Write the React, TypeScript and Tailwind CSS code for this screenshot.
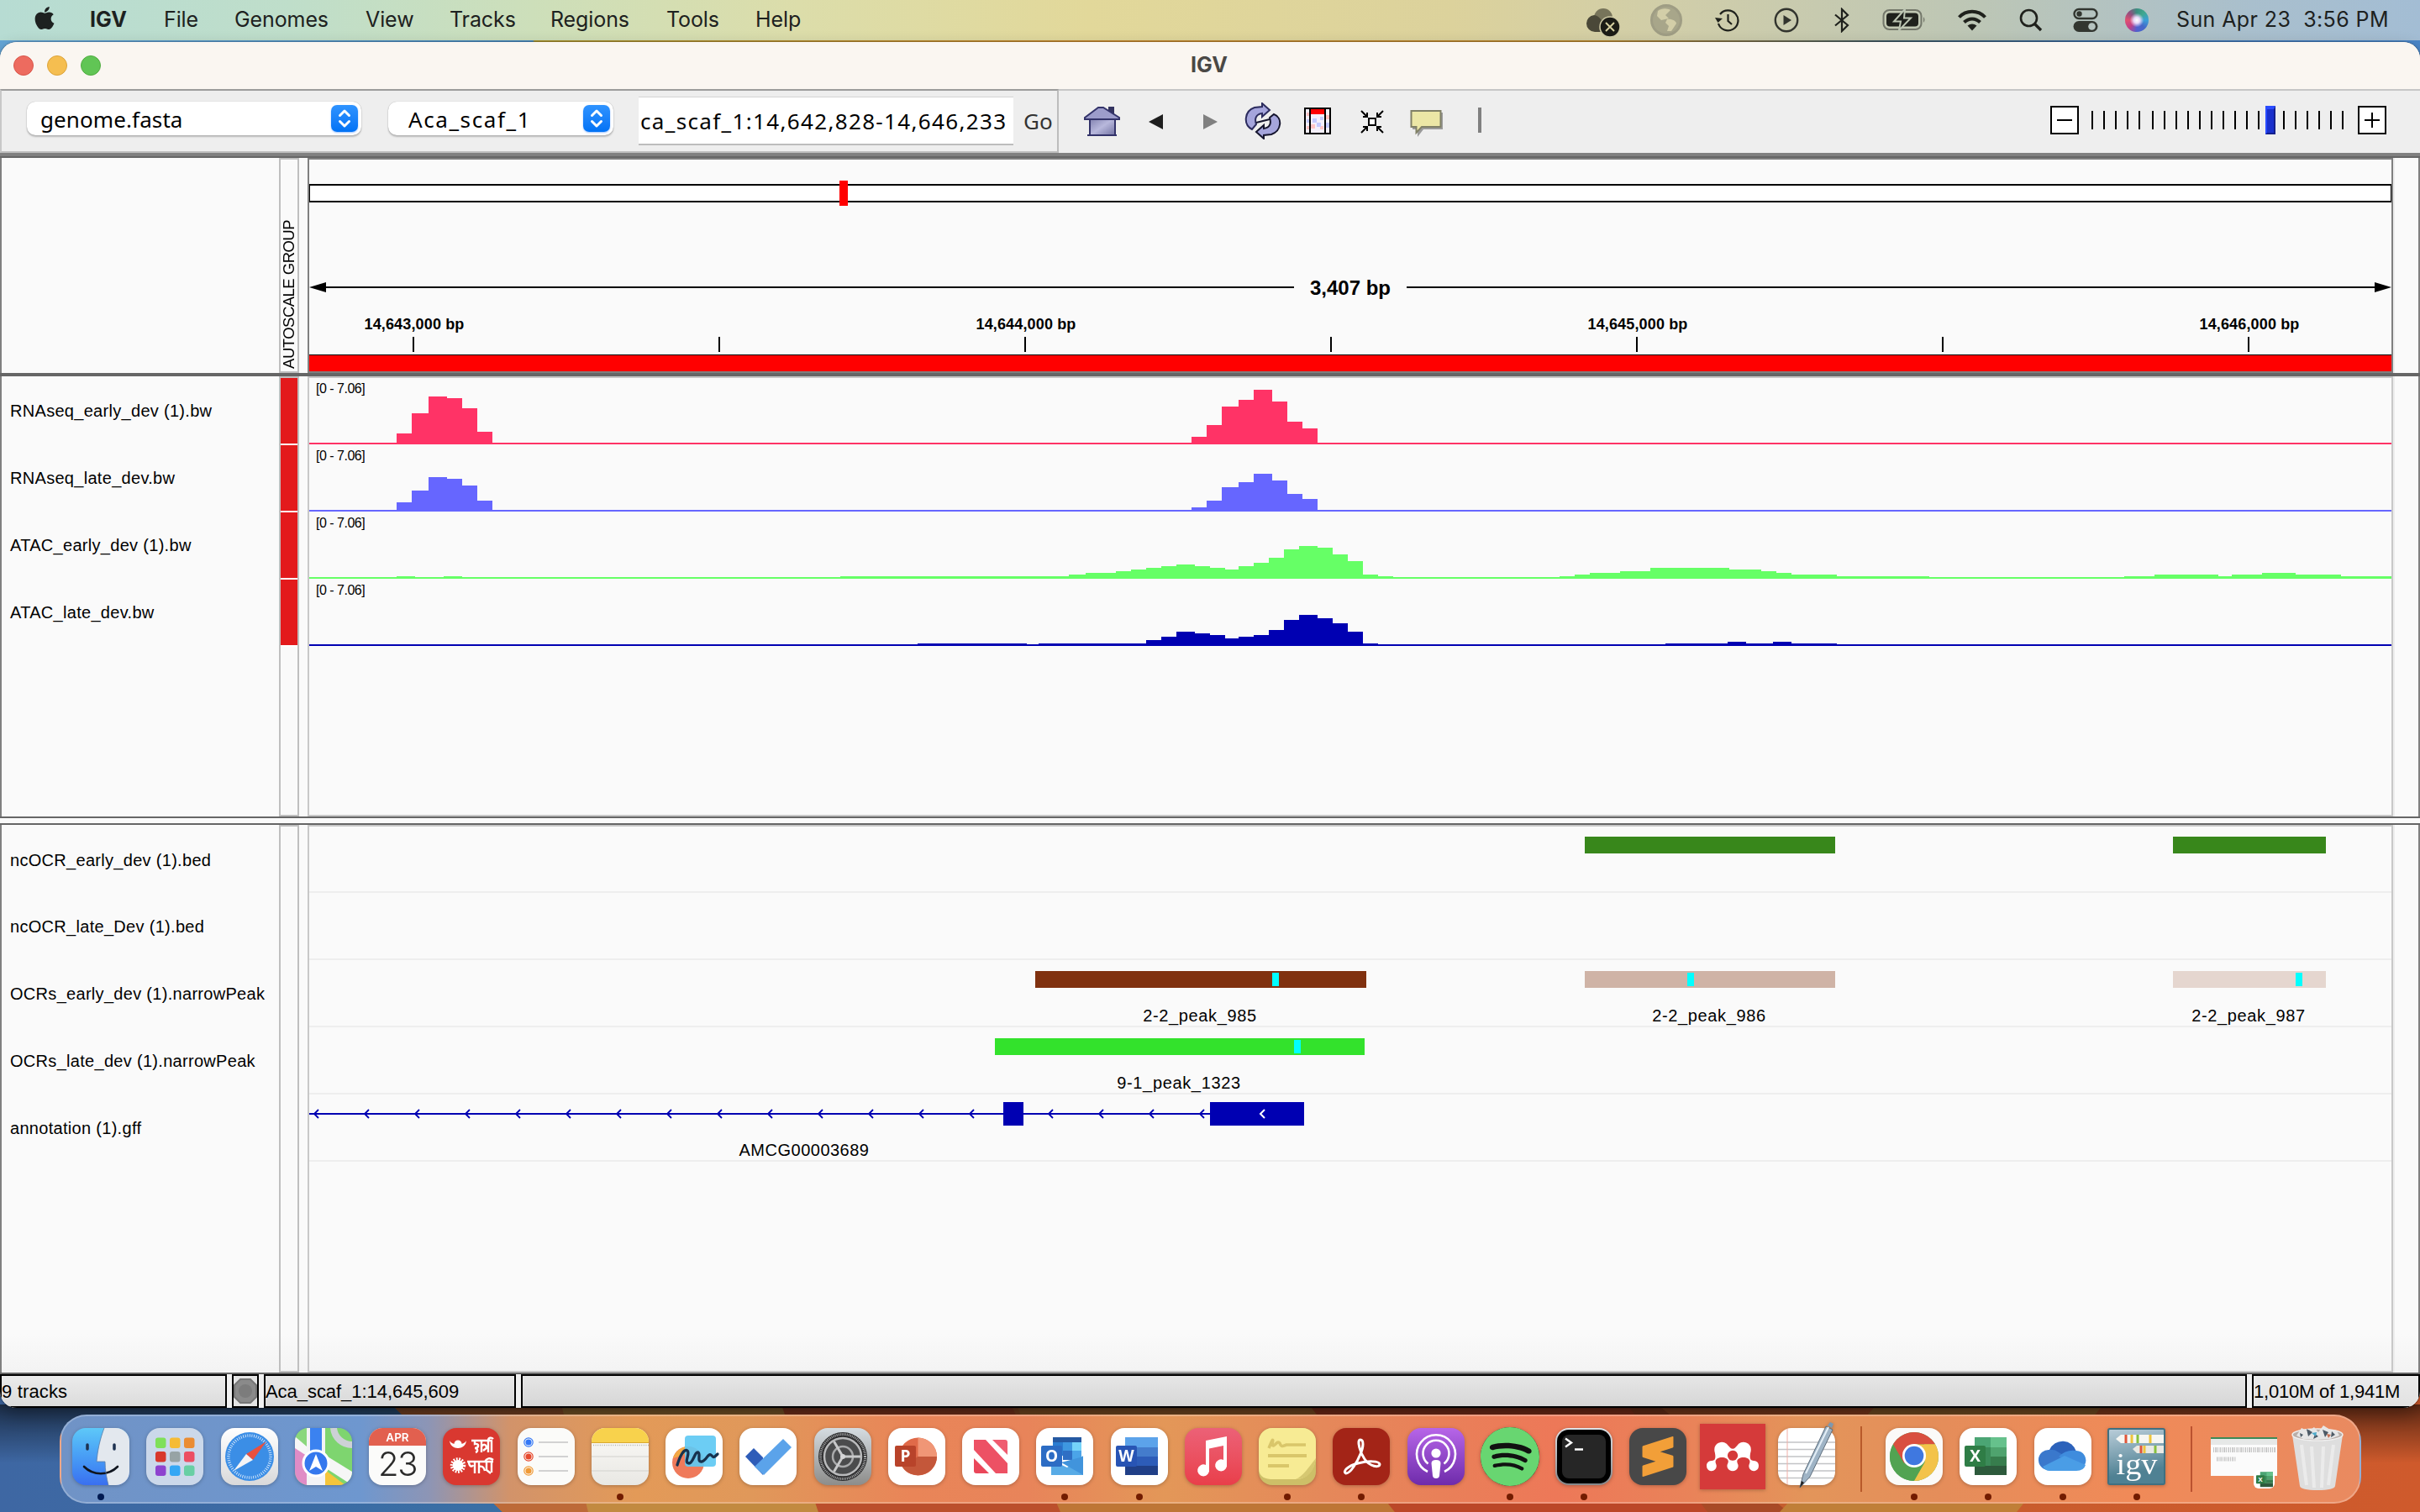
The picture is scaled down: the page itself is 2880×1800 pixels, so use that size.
import type { ReactNode } from "react";
import { FaApple } from "react-icons/fa";
import { SiMendeley, SiSublimetext, SiSpotify } from "react-icons/si";

/* ---------- wallpaper ---------- */

function Wallpaper() {
  return (
    <svg className="absolute inset-0" width="2880" height="1800" viewBox="0 0 2880 1800">
      <defs>
        <linearGradient id="wpTop" x1="0" x2="1">
          <stop offset="0" stopColor="#64a5d6" />
          <stop offset="0.22" stopColor="#4a8bbf" />
          <stop offset="0.221" stopColor="#a8922f" />
          <stop offset="0.45" stopColor="#c4872f" />
          <stop offset="0.66" stopColor="#b8862f" />
          <stop offset="0.78" stopColor="#3f5a66" />
          <stop offset="0.88" stopColor="#3a70ae" />
          <stop offset="1" stopColor="#4a86c8" />
        </linearGradient>
        <linearGradient id="wpBlue" x1="0" x2="1">
          <stop offset="0" stopColor="#3e67a3" />
          <stop offset="1" stopColor="#3a6fa5" />
        </linearGradient>
        <linearGradient id="wpRight" x1="0" x2="1">
          <stop offset="0" stopColor="#c47a38" />
          <stop offset="0.5" stopColor="#bd602f" />
          <stop offset="1" stopColor="#cf5a2c" />
        </linearGradient>
        <linearGradient id="wpShade" x1="0" x2="0" y1="0" y2="1">
          <stop offset="0" stopColor="#000" stopOpacity="0.55" />
          <stop offset="0.35" stopColor="#000" stopOpacity="0.35" />
          <stop offset="1" stopColor="#000" stopOpacity="0" />
        </linearGradient>
      </defs>
      <rect width="2880" height="200" fill="url(#wpTop)" />
      <rect y="1600" width="2880" height="200" fill="url(#wpRight)" />
      <path d="M0 1600H400L470 1676L598 1800H0Z" fill="url(#wpBlue)" />
      <path d="M400 1600L470 1676L598 1800H780V1600Z" fill="#bd6a38" />
      <path d="M700 1800L650 1600H910L974 1800Z" fill="#c28a40" />
      <path d="M974 1800L905 1600H1170L1262 1800Z" fill="#bb4f2c" />
      <path d="M1262 1800L1180 1600H1500L1660 1800Z" fill="#be7636" />
      <path d="M1660 1800L1500 1600H1920L2032 1800Z" fill="#bb4728" />
      <path d="M2032 1800L1935 1670L1970 1670L2128 1800Z" fill="#a84a26" />
      <path d="M2118 1800L2230 1676H2500L2400 1800Z" fill="#c07f38" />
      <rect y="1672" width="2880" height="70" fill="url(#wpShade)" />
    </svg>
  );
}

/* ---------- menu bar ---------- */

const menus = [
  { label: "File", cls: "ml-[41px] w-[43px]" },
  { label: "Genomes", cls: "ml-[41px] w-[115px]" },
  { label: "View", cls: "ml-[41px] w-[59px]" },
  { label: "Tracks", cls: "ml-[41px] w-[79px]" },
  { label: "Regions", cls: "ml-[41px] w-[97px]" },
  { label: "Tools", cls: "ml-[41px] w-[65px]" },
  { label: "Help", cls: "ml-[41px] w-[56px]" },
];

function MenuBar() {
  return (
    <div className="relative flex h-12 shrink-0 items-center bg-[linear-gradient(90deg,#b7dcd3_0%,#bfdeca_12%,#cddfba_22%,#dcddaa_33%,#e2d89a_45%,#dcd29c_60%,#cfcdaa_70%,#bcc6b6_82%,#a9bfcd_93%,#a3bdd4_100%)] text-[25px] leading-[30px] text-[#1d2120]">
      <FaApple className="ml-[38px] -mt-[6px] h-[31px] w-[30px]" />
      <span className="-mt-[2px] ml-[39px] w-[47px] font-bold">IGV</span>
      {menus.map((m) => (
        <span key={m.label} className={`${m.cls} -mt-[2px] whitespace-nowrap tracking-[-0.1px]`}>
          {m.label}
        </span>
      ))}
      <div className="flex-1" />
      <svg width="42" height="36" viewBox="0 0 42 36" className="mt-[5px]">
        <circle cx="21" cy="12" r="11" fill="#77745a" />
        <path d="M1 19a10 10 0 0 1 9-10c4 0 8 4 10 8l-2 12H11A10 10 0 0 1 1 19Z" fill="#4a4838" />
        <circle cx="29" cy="23" r="12" fill="#1c1c16" stroke="#d0cba6" strokeWidth="1.500" />
        <path d="M24 18L34 28M34 18L24 28" stroke="#d6d0a0" strokeWidth="2" />
      </svg>
      <svg width="38" height="38" viewBox="0 0 38 38" className="ml-[35px]">
        <circle cx="19" cy="19" r="17.500" fill="#a8a68a" stroke="#9f9d84" strokeWidth="3" />
        <path d="M9 8C14 4 21 5 24 7L18 13L22 17L13 19L8 14ZM20 18C25 17 31 20 31 23L25 32H20L22 26L18 22Z" fill="#d3cea8" />
      </svg>
      <svg width="30" height="28" viewBox="0 0 30 28" className="ml-[39px]" fill="none" stroke="#1f211c" strokeWidth="2.2">
        <path d="M4 18A12 12 0 1 0 6 7" />
        <path d="M0 11L3.500 17L9 12Z" fill="#1f211c" stroke="none" />
        <path d="M15.500 7V15L20 19" />
      </svg>
      <svg width="30" height="30" viewBox="0 0 30 30" className="ml-[40px]">
        <circle cx="15" cy="15" r="13.200" fill="none" stroke="#32342e" strokeWidth="2.400" />
        <path d="M11.500 9L21 15L11.500 21Z" fill="#32342e" />
      </svg>
      <svg width="20" height="30" viewBox="0 0 20 30" className="ml-[41px]" fill="none" stroke="#1f211c" strokeWidth="2.200">
        <path d="M2 8.500L17 21L10 28V2L17 9L2 21.500" />
      </svg>
      <svg width="54" height="28" viewBox="0 0 54 28" className="ml-[38px]">
        <rect x="1.500" y="2" width="45" height="23" rx="7" fill="none" stroke="#73776a" strokeWidth="2" />
        <rect x="5" y="5.500" width="38" height="16" rx="4" fill="#1f211c" />
        <path d="M49 10q3 3.500 0 7Z" fill="#73776a" />
        <path d="M27 1L14 15.500H22L20 26L34 11.500H26Z" fill="#1f211c" stroke="#bcc5b2" strokeWidth="2" />
      </svg>
      <svg width="36" height="28" viewBox="0 0 36 28" className="ml-[35px]" fill="none" stroke="#1f211c" strokeWidth="4">
        <path d="M2.500 10.500C11 1.500 25 1.500 33.500 10.500" />
        <path d="M8.500 16.500C14 11 22 11 27.500 16.500" />
        <path d="M18 26.500L12.500 20.500Q18 16.500 23.500 20.500Z" fill="#1f211c" stroke="none" />
      </svg>
      <svg width="28" height="28" viewBox="0 0 28 28" className="ml-[38px]" fill="none" stroke="#1f211c" strokeWidth="2.600">
        <circle cx="11.500" cy="11.500" r="9.500" />
        <path d="M18.500 18.500L26 26" strokeWidth="3.400" />
      </svg>
      <svg width="30" height="30" viewBox="0 0 30 30" className="ml-[36px]">
        <rect x="1.500" y="2" width="27" height="11" rx="5.500" fill="none" stroke="#323630" strokeWidth="2.400" />
        <circle cx="7.500" cy="7.500" r="3.200" fill="#323630" />
        <rect x="0.500" y="16" width="29" height="13" rx="6.500" fill="#323630" />
        <circle cx="22.500" cy="22.500" r="4.300" fill="#b5c3bf" />
      </svg>
      <div className="ml-[32px] h-[28px] w-[28px] rounded-full bg-[radial-gradient(circle_at_50%_50%,#fff_0%,#e8d8f8_18%,transparent_42%),conic-gradient(#3a8f80,#3fa890,#3a9fd8,#4468c8,#5060d0,#c04088,#e05070,#905080,#3a8f80)]" />
      <span className="-mt-[2px] ml-[33px] mr-[38px] w-[252px] whitespace-pre text-left tracking-[0.400px]">Sun Apr 23  3:56 PM</span>
    </div>
  );
}

/* ---------- toolbar ---------- */

function Stepper() {
  return (
    <div className="flex h-8 w-8 items-center justify-center rounded-[7px] bg-linear-to-b from-[#2e93ff] to-[#0072f5] shadow-[0_1px_2px_rgba(0,100,255,0.4)]">
      <svg width="32" height="32" viewBox="0 0 32 32" fill="none" stroke="#fff" strokeWidth="3" strokeLinecap="round" strokeLinejoin="round">
        <path d="M10.500 12.500L16 7L21.500 12.500M10.500 19.500L16 25L21.500 19.500" />
      </svg>
    </div>
  );
}

const zoomLow = Array.from({ length: 5 }, (_, i) => i);
const zoomMid = Array.from({ length: 10 }, (_, i) => i);
const zoomHigh = Array.from({ length: 6 }, (_, i) => i);

function Toolbar() {
  return (
    <div className="flex h-[76px] shrink-0 bg-[#eeeeee]">
      <div className="flex w-[1260px] border-x-2 border-y-2 border-t-[#9c9c9c] border-r-[#bcbcbc] border-b-[#bfbfbf] border-l-[#c8c8c8] font-['Noto_Sans','Open_Sans',sans-serif] text-[26px] text-black">
        <div className="ml-[30px] mt-[13px] flex h-10 w-[398px] items-center justify-between rounded-[10px] bg-white pl-4 pr-1 shadow-[0_0_1px_rgba(0,0,0,0.35),0_2px_2px_rgba(0,0,0,0.22)]">
          <span className="mt-[2px] tracking-[0.100px]">genome.fasta</span>
          <Stepper />
        </div>
        <div className="ml-8 mt-[13px] flex h-10 w-[268px] items-center justify-between rounded-[10px] bg-white pl-6 pr-1 shadow-[0_0_1px_rgba(0,0,0,0.35),0_2px_2px_rgba(0,0,0,0.22)]">
          <span className="mt-[2px] tracking-[1.600px]">Aca_scaf_1</span>
          <Stepper />
        </div>
        <div className="ml-[30px] mt-[7px] flex h-[58px] w-[446px] items-center border-t border-b-2 border-t-[#d4d4d4] border-b-[#bdbdbd] bg-white pl-[2px]">
          <span className="mt-[2px] whitespace-nowrap tracking-[1.350px]">ca_scaf_1:14,642,828-14,646,233</span>
        </div>
        <span className="ml-3 mt-[18px] leading-[36px] text-[#333]">Go</span>
      </div>
      <div className="flex flex-1 items-center border-t-2 border-[#c6c6c6]">
        <svg width="44" height="38" viewBox="0 0 44 38" className="ml-[30px]">
          <defs>
            <linearGradient id="house" x1="0" x2="1" y1="0" y2="1">
              <stop offset="0" stopColor="#7d7dac" />
              <stop offset="0.5" stopColor="#b8b8dc" />
              <stop offset="1" stopColor="#7272a2" />
            </linearGradient>
          </defs>
          <path d="M29 1H36V12H29Z" fill="#33335f" />
          <path d="M7 14H37V35H7Z" fill="url(#house)" stroke="#33336a" strokeWidth="2" />
          <path d="M1 14L17 2H23L42 14V16H1Z" fill="#9c9ccb" stroke="#33336a" strokeWidth="2" />
          <path d="M1 16H42" stroke="#33336a" strokeWidth="2" />
          <path d="M4 35H39" stroke="#33336a" strokeWidth="2" />
        </svg>
        <svg width="18" height="20" viewBox="0 0 18 20" className="ml-[33px]">
          <path d="M0 10L17 1V19Z" fill="#1e1e1e" />
        </svg>
        <svg width="18" height="20" viewBox="0 0 18 20" className="ml-[46px]">
          <path d="M18 10L1 1V19Z" fill="#808080" />
        </svg>
        <svg width="44" height="44" viewBox="0 0 44 44" className="-mt-[2px] ml-[32px]" strokeWidth="2">
          <path d="M21 1L30 9L21 17V13C13 14 12 20 14 26L9 32C-2 26 0 10 12 6L21 5Z" fill="#a5a5dc" stroke="#2c2c5e" />
          <path d="M23 43L14 35L23 27V31C31 30 32 24 30 18L35 14C46 18 44 34 32 38L23 39Z" fill="#a5a5dc" stroke="#15152e" />
          <path d="M14 24L22 22M22 22L30 20" stroke="#15152e" />
        </svg>
        <svg width="32" height="32" viewBox="0 0 32 32" className="-mt-[2px] ml-[27px]">
          <rect width="32" height="32" fill="#000" />
          <rect x="2" y="2" width="28" height="28" fill="#f4f0fb" />
          <path d="M3 6h4v4H3zM26 9h4v5H26zM8 20h5v5H8zM19 22h4v4H19zM3 22h3v4H3z" fill="#ffc4c4" />
          <path d="M10 13h5v5H10zM15 18h5v5H15zM3 14h4v4H3zM26 18h4v6H26zM19 11h4v4H19z" fill="#c4caff" />
          <rect x="8" y="2" width="17" height="6" fill="#f00" />
          <path d="M7 0V32M25 0V32" stroke="#000" strokeWidth="2" />
        </svg>
        <svg width="28" height="28" viewBox="0 0 28 28" className="ml-[35px]" stroke="#000" strokeWidth="2" fill="none">
          <rect x="10" y="10" width="8" height="8" fill="#fff" />
          <path d="M1 1L8 8M27 1L20 8M1 27L8 20M27 27L20 20M3 8H8V3M25 8H20V3M3 20H8V25M25 20H20V25" />
        </svg>
        <svg width="40" height="34" viewBox="0 0 40 34" className="ml-[31px] mt-[3px]">
          <path d="M3 4H39V24H16L9 33V24H3Z" fill="#9a9a9a" />
          <path d="M1.500 2H36.500V21H14L7.500 28V21H1.500Z" fill="#ece7a6" stroke="#808066" strokeWidth="2" />
        </svg>
        <div className="-mt-[4px] ml-[41px] h-[30px] w-1 bg-[#808080]" />
        <div className="flex-1" />
        <div className="mb-[4px] flex items-center">
          <div className="flex h-[34px] w-[34px] items-center justify-center border-2 border-black bg-white">
            <div className="h-[2px] w-[18px] bg-black" />
          </div>
          <div className="ml-[15px] flex gap-3">
            {zoomLow.map((i) => (
              <div key={i} className="h-[22px] w-[2px] bg-black" />
            ))}
          </div>
          <div className="ml-[14px] flex gap-3">
            {zoomMid.map((i) => (
              <div key={i} className="h-[22px] w-[2px] bg-black" />
            ))}
          </div>
          <div className="ml-[7px] h-[34px] w-3 border-b-2 border-l-2 border-r-2 border-t-4 border-b-[#14208c] border-l-[#2a4cff] border-r-[#14208c] border-t-[#2a4cff] bg-[#1a30cc]" />
          <div className="ml-[9px] flex gap-3">
            {zoomHigh.map((i) => (
              <div key={i} className="h-[22px] w-[2px] bg-black" />
            ))}
          </div>
          <div className="ml-[17px] mr-10 flex h-[34px] w-[34px] items-center justify-center border-2 border-black bg-white">
            <svg width="18" height="18" viewBox="0 0 18 18" stroke="#000" strokeWidth="2">
              <path d="M0 9H18M9 0V18" />
            </svg>
          </div>
        </div>
      </div>
    </div>
  );
}

/* ---------- panels ---------- */

function AttributeColumn({ children }: { children?: ReactNode }) {
  return <div className="flex w-6 shrink-0 flex-col border-2 border-[#bfbfbf]">{children}</div>;
}

function RightGutter() {
  return <div className="w-[32px] shrink-0 border-l-2 border-r-2 border-l-[#ededed] border-r-[#808080]" />;
}

const rulerTicks = [
  { x: 124, label: "14,643,000 bp" },
  { x: 488, label: "" },
  { x: 852, label: "14,644,000 bp" },
  { x: 1216, label: "" },
  { x: 1580, label: "14,645,000 bp" },
  { x: 1944, label: "" },
  { x: 2308, label: "14,646,000 bp" },
];

function HeaderPanel() {
  return (
    <div className="flex h-[256px] shrink-0 border-l-2 border-[#808080] bg-[#fafafa]">
      <div className="w-[330px] shrink-0" />
      <AttributeColumn>
        <div className="flex flex-1 items-center justify-center overflow-visible">
          <span className="mt-[69px] rotate-180 whitespace-nowrap text-[18.500px] leading-[20px] tracking-[-0.520px] text-black [writing-mode:vertical-rl]">
            AUTOSCALE GROUP
          </span>
        </div>
      </AttributeColumn>
      <div className="ml-[10px] flex w-[2482px] shrink-0 flex-col border-2 border-[#808080]">
        <div className="relative mt-[29px] h-[22px] border-x border-y-2 border-black bg-white">
          <div className="absolute left-[630px] top-[-6px] h-[30px] w-[10px] bg-[#f00]" />
        </div>
        <div className="mt-[86px] flex h-[30px] items-center">
          <svg width="20" height="14" viewBox="0 0 20 14">
            <path d="M0 7L20 1V13Z" fill="#000" />
          </svg>
          <div className="h-[2px] flex-1 bg-black" />
          <span className="w-[134px] pt-px text-center text-[24px] font-bold leading-[30px] text-black">3,407 bp</span>
          <div className="h-[2px] flex-1 bg-black" />
          <svg width="20" height="14" viewBox="0 0 20 14">
            <path d="M20 7L0 1V13Z" fill="#000" />
          </svg>
        </div>
        <div className="relative h-[65px]">
          {rulerTicks.map((t) => (
            <div key={t.x} className="absolute top-[19px] flex w-[160px] -translate-x-1/2 flex-col items-center" style={{ left: t.x }}>
              <span className="h-[20px] whitespace-nowrap pl-[2px] text-[18px] font-bold leading-[20px] tracking-[0.150px] text-black">{t.label}</span>
              <div className="mt-[5px] h-[18px] w-[2px] bg-black" />
            </div>
          ))}
        </div>
        <div className="h-[20px] border-t border-black bg-[#f00]" />
      </div>
      <RightGutter />
    </div>
  );
}

/* Each step is [start, height above the baseline]; a height of 0 ends a run. */
type Step = [number, number];

const rnaX1 = [104, 122, 142, 164, 182, 200, 218];
const rnaX2 = [1050, 1068, 1086, 1106, 1124, 1146, 1164, 1182, 1200];

function run(xs: number[], hs: number[]): Step[] {
  return xs.map((x, i) => [x, hs[i] ?? 0]);
}

const signals: { name: string; color: string; steps: Step[] }[] = [
  {
    name: "RNAseq_early_dev (1).bw",
    color: "#ff3366",
    steps: [...run(rnaX1, [12, 36, 56, 54, 42, 14]), ...run(rnaX2, [8, 22, 44, 52, 64, 50, 26, 18])],
  },
  {
    name: "RNAseq_late_dev.bw",
    color: "#6666ff",
    steps: [...run(rnaX1, [10, 24, 40, 38, 30, 12]), ...run(rnaX2, [4, 12, 28, 34, 44, 36, 20, 14])],
  },
  {
    name: "ATAC_early_dev (1).bw",
    color: "#66ff66",
    steps: [
      [104, 2], [126, 0], [160, 2], [182, 0], [632, 2], [904, 4], [924, 6], [960, 8], [978, 10], [996, 12],
      [1014, 14], [1032, 16], [1054, 14], [1072, 12], [1090, 10], [1106, 14], [1124, 18], [1142, 24],
      [1160, 34], [1178, 38], [1200, 36], [1218, 28], [1236, 20], [1254, 4], [1272, 2], [1290, 0],
      [1488, 2], [1506, 4], [1524, 6], [1560, 8], [1596, 12], [1690, 10], [1728, 8], [1746, 6], [1764, 4],
      [1818, 2], [1928, 0], [2160, 2], [2196, 4], [2272, 2], [2288, 4], [2324, 6], [2364, 4], [2418, 2], [2478, 0],
    ],
  },
  {
    name: "ATAC_late_dev.bw",
    color: "#0000b2",
    steps: [
      [724, 2], [854, 0], [868, 2], [996, 6], [1014, 10], [1032, 16], [1054, 14], [1072, 12], [1090, 8],
      [1106, 10], [1124, 12], [1142, 18], [1160, 30], [1178, 36], [1200, 32], [1218, 26], [1236, 16],
      [1254, 2], [1272, 0], [1614, 2], [1688, 4], [1710, 2], [1742, 4], [1764, 2], [1818, 0],
    ],
  },
];

function signalPath(steps: Step[]): string {
  let d = "M0 79V77";
  let level = 77;
  for (const [x, h] of steps) {
    level = h === 0 ? 77 : 78 - h;
    d += `H${x}V${level}`;
  }
  return `${d}H2478V79Z`;
}

function TrackName({ children, first }: { children: ReactNode; first?: boolean }) {
  return (
    <div className={`flex items-center whitespace-nowrap pb-px pl-[10px] text-[20px] tracking-[0.300px] text-black ${first ? "h-[78px]" : "h-20"}`}>
      {children}
    </div>
  );
}

function SignalPanel() {
  return (
    <div className="flex h-[524px] shrink-0 border-l-2 border-[#808080] bg-[#fafafa]">
      <div className="w-[330px] shrink-0 pt-px">
        {signals.map((s) => (
          <TrackName key={s.name}>{s.name}</TrackName>
        ))}
      </div>
      <AttributeColumn>
        {signals.map((s) => (
          <div key={s.name} className="h-20 border-b-2 border-white bg-[#e31a1c]" />
        ))}
      </AttributeColumn>
      <div className="ml-[10px] w-[2482px] shrink-0 border-2 border-[#c8c8c8]">
        {signals.map((s) => (
          <div key={s.name} className="relative h-20">
            <svg className="block" width="2478" height="80" viewBox="0 0 2478 80" shapeRendering="crispEdges">
              <path d={signalPath(s.steps)} fill={s.color} />
            </svg>
            <span className="absolute left-[8px] top-[3px] whitespace-nowrap text-[16px] leading-[20px] tracking-[-0.500px] text-black">[0 - 7.06]</span>
          </div>
        ))}
      </div>
      <RightGutter />
    </div>
  );
}

type Feature = { x: number; w: number; color: string; summit?: number; label?: string };

const featureTracks: { name: string; features: Feature[] }[] = [
  {
    name: "ncOCR_early_dev (1).bed",
    features: [
      { x: 1518, w: 298, color: "#38871b" },
      { x: 2218, w: 182, color: "#38871b" },
    ],
  },
  { name: "ncOCR_late_Dev (1).bed", features: [] },
  {
    name: "OCRs_early_dev (1).narrowPeak",
    features: [
      { x: 864, w: 394, color: "#80310f", summit: 1146, label: "2-2_peak_985" },
      { x: 1518, w: 298, color: "#cfb3a6", summit: 1640, label: "2-2_peak_986" },
      { x: 2218, w: 182, color: "#e5d6cf", summit: 2364, label: "2-2_peak_987" },
    ],
  },
  {
    name: "OCRs_late_dev (1).narrowPeak",
    features: [{ x: 816, w: 440, color: "#33e22c", summit: 1172, label: "9-1_peak_1323" }],
  },
];

const strandMarks = [
  ...Array.from({ length: 14 }, (_, i) => 6 + i * 60),
  880, 940, 1000, 1060,
];

function GeneTrack() {
  return (
    <div className="relative h-20 border-b-2 border-[#eeeeee]">
      <svg className="block" width="2478" height="44" viewBox="0 0 2478 44" fill="none">
        <rect y="22" width="1072" height="2" fill="#0000b2" />
        {strandMarks.map((x) => (
          <path key={x} d={`M${x + 5} 18L${x} 23L${x + 5} 28`} stroke="#0000b2" strokeWidth="1.800" />
        ))}
        <rect x="826" y="9" width="24" height="28" fill="#0000b2" />
        <rect x="1072" y="9" width="112" height="28" fill="#0000b2" />
        <path d="M1137 18L1132 23L1137 28" stroke="#fff" strokeWidth="2" />
      </svg>
      <span className="absolute left-[589px] top-[54px] -translate-x-1/2 whitespace-nowrap text-[20px] leading-[24px] tracking-[0.500px] text-black">
        AMCG00003689
      </span>
    </div>
  );
}

function FeaturePanel() {
  return (
    <div className="flex h-[652px] shrink-0 border-l-2 border-[#808080] bg-[linear-gradient(180deg,#fafafa_0%,#fafafa_93%,#f3f3f3_100%)]">
      <div className="w-[330px] shrink-0 pt-[3px]">
        {featureTracks.map((t, i) => (
          <TrackName key={t.name} first={i === 0}>
            {t.name}
          </TrackName>
        ))}
        <TrackName>annotation (1).gff</TrackName>
      </div>
      <AttributeColumn />
      <div className="ml-[10px] w-[2482px] shrink-0 border-2 border-[#c8c8c8]">
        {featureTracks.map((t, i) => (
          <div key={t.name} className={`relative border-b-2 border-[#eeeeee] ${i === 0 ? "-mt-px h-20" : "h-20"}`}>
            {t.features.map((f) => (
              <div key={f.x}>
                <div className="absolute top-[13px] h-[20px]" style={{ left: f.x, width: f.w, backgroundColor: f.color }} />
                {f.summit !== undefined && <div className="absolute top-[15px] h-[16px] w-[8px] bg-[#0ff]" style={{ left: f.summit }} />}
                {f.label && (
                  <span
                    className="absolute top-[54px] -ml-[1px] -translate-x-1/2 whitespace-nowrap text-[20px] leading-[24px] tracking-[0.650px] text-black"
                    style={{ left: f.x + f.w / 2 }}
                  >
                    {f.label}
                  </span>
                )}
              </div>
            ))}
          </div>
        ))}
        <GeneTrack />
      </div>
      <RightGutter />
    </div>
  );
}

function StatusBar() {
  return (
    <div className="flex h-10 shrink-0 gap-[6px] bg-[#f0f0f0] text-[22px] leading-[32px] text-black">
      <div className="w-[270px] border-2 border-black bg-[linear-gradient(180deg,#ebebeb,#dcdcdc)] pt-[3px] tracking-[0.150px]">9 tracks</div>
      <div className="flex w-8 items-center justify-center border-2 border-black bg-[#e4e4e4]">
        <svg width="28" height="30" viewBox="0 0 28 30">
          <path d="M8 1H20L27 8V22L20 29H8L1 22V8Z" fill="#8a8a8a" stroke="#767676" strokeWidth="2" />
          <circle cx="14" cy="15" r="8" fill="#7c7c7c" />
        </svg>
      </div>
      <div className="w-[300px] border-2 border-black bg-[linear-gradient(180deg,#e8e8e8,#d8d8d8)] pt-[3px] tracking-[-0.050px]">Aca_scaf_1:14,645,609</div>
      <div className="w-[2054px] border-2 border-black bg-[linear-gradient(180deg,#e6e6e6,#d6d6d6)]" />
      <div className="w-[200px] border-2 border-black bg-[linear-gradient(180deg,#ebebeb,#e2e2e2)] pt-[3px] tracking-[-0.200px]">1,010M of 1,941M</div>
    </div>
  );
}

function AppWindow() {
  return (
    <div className="relative mt-[2px] flex h-[1626px] shrink-0 flex-col overflow-hidden rounded-[20px] bg-[#fafafa] shadow-[0_0_2px_rgba(0,0,0,0.6),0_8px_20px_rgba(0,0,0,0.3)]">
      <div className="grid h-[56px] shrink-0 grid-cols-3 items-center bg-[#faf6f1]">
        <div className="flex gap-4 pl-4">
          <div className="h-6 w-6 rounded-full border border-[#d9564b] bg-[#ed6b5f]" />
          <div className="h-6 w-6 rounded-full border border-[#dba33a] bg-[#f5be50]" />
          <div className="h-6 w-6 rounded-full border border-[#50ac40] bg-[#61c555]" />
        </div>
        <span className="-ml-[2px] text-center font-[Inter,sans-serif] text-[25px] font-bold text-[#4a4845]">IGV</span>
      </div>
      <Toolbar />
      <div className="h-1 shrink-0 bg-[#808080]" />
      <div className="h-[2px] shrink-0 bg-[#666]" />
      <HeaderPanel />
      <div className="h-1 shrink-0 bg-[#666]" />
      <SignalPanel />
      <div className="h-[10px] shrink-0 border-y-2 border-[#666] bg-[#fafafa]" />
      <FeaturePanel />
      <div className="h-[2px] shrink-0 bg-[#666]" />
      <StatusBar />
    </div>
  );
}

/* ---------- dock ---------- */

function DockItem({ children, running, blue }: { children: ReactNode; running?: boolean; blue?: boolean }) {
  return (
    <div className="flex w-[88.250px] flex-col items-center">
      <div className="flex h-[78px] items-center justify-center drop-shadow-[0_1px_2px_rgba(0,0,0,0.25)]">{children}</div>
      {running && <div className={`mt-[5px] h-2 w-2 rounded-full ${blue ? "bg-[#001a52]" : "bg-[#721c00]"}`} />}
    </div>
  );
}

function Tile({ children, className }: { children?: ReactNode; className: string }) {
  return (
    <div className={`h-[68px] w-[68px] overflow-hidden rounded-[16px] ${className}`}>
      <svg className="block" width="68" height="68" viewBox="0 0 68 68">
        {children}
      </svg>
    </div>
  );
}

function OfficeBadge({ x, y, s, color, letter }: { x: number; y: number; s: number; color: string; letter: string }) {
  return (
    <g>
      <rect x={x} y={y} width={s} height={s} rx={s * 0.08} fill={color} />
      <text x={x + s / 2} y={y + s * 0.77} textAnchor="middle" fontSize={s * 0.76} fontWeight="700" fontFamily="Open Sans, sans-serif" fill="#fff">
        {letter}
      </text>
    </g>
  );
}

function ExcelMark() {
  return (
    <g>
      <path d="M18 11H56V34H18Z" fill="#4ba574" />
      <path d="M37 11H56V23H37Z" fill="#66c18c" />
      <path d="M37 23H56V34H37Z" fill="#4fa36e" />
      <path d="M18 34H56V45H18Z" fill="#377d4d" />
      <path d="M18 45H56V56H18Z" fill="#2d5a3c" />
      <path d="M18 23H37V45H18Z" fill="#3b8a58" />
      <OfficeBadge x={6} y={21} s={25} color="#2f7d46" letter="X" />
    </g>
  );
}

const launchpadDots = ["#7fe05a", "#f5bb35", "#ea8c33", "#d8382c", "#97a3a5", "#ec4e63", "#8e43cf", "#33a7f5", "#68cfa4"];

function MusicNote() {
  return (
    <path d="M25 15L50 10V43A7 7 0 1 1 46 38V21L29 24.500V49A7 7 0 1 1 25 44Z" fill="#fff" />
  );
}

function Dock() {
  return (
    <div className="relative mx-auto ml-[71px] mt-2 flex h-[106px] w-[2739px] shrink-0 rounded-[32px] border-2 border-white/25 bg-[linear-gradient(90deg,#7093c6_0%,#6e97cf_13%,#8d95b5_16%,#d2936a_19.500%,#e39a58_25%,#e0985a_30%,#e98558_37%,#e8845a_42%,#e39758_48%,#e5885a_55%,#ed7858_65%,#e98359_71%,#e3955a_76%,#e58d5a_82%,#f08a58_90%,#e98a60_100%)] pl-[3px] pt-[9px]">
      <DockItem running blue>
        <Tile className="bg-linear-to-b from-[#5ec8f8] to-[#3a6ff0]">
          <path d="M38 0C33 13 30 27 29 40H39C39 50 41 60 43 68H68V0Z" fill="#e3e8ee" />
          <path d="M18 20V25M50 20V25" stroke="#1d3150" strokeWidth="3.500" strokeLinecap="round" />
          <path d="M14 46C25 57 43 57 54 46" fill="none" stroke="#10151f" strokeWidth="2.600" strokeLinecap="round" />
          <path d="M38 0C33 13 30 27 29 40H39C39 50 41 60 43 68" fill="none" stroke="#5a7ea8" strokeWidth="0.800" />
        </Tile>
      </DockItem>
      <DockItem>
        <Tile className="bg-[#cbd8ea]">
          {launchpadDots.map((c, i) => (
            <rect key={c} x={11 + (i % 3) * 17} y={11.500 + Math.floor(i / 3) * 16.500} width="12.500" height="12.500" rx="3" fill={c} />
          ))}
        </Tile>
      </DockItem>
      <DockItem>
        <Tile className="bg-linear-to-b from-white to-[#d9d9da]">
          <circle cx="34" cy="34" r="29" fill="#3b8ee6" />
          <circle cx="34" cy="34" r="25" fill="none" stroke="#d8e9fb" strokeWidth="3.500" strokeDasharray="0.900 1.700" />
          <path d="M54 16L38 38L30 31Z" fill="#e8503f" />
          <path d="M15 51L30 31L38 38Z" fill="#f4f4f6" />
        </Tile>
      </DockItem>
      <DockItem>
        <Tile className="bg-[#7ed56f]">
          <path d="M0 14L20 28V68H0Z" fill="#e08cc6" />
          <path d="M0 10L68 52V68L0 24Z" fill="#f6f6f6" />
          <path d="M0 0H14V22L0 10Z" fill="#8ad77c" />
          <path d="M14 0H36V68H14Z" fill="#f3f3f5" />
          <path d="M18 0H32V40H18Z" fill="#3b82f0" />
          <path d="M36 50L60 68H36Z" fill="#f5c53b" />
          <path d="M46 0A22 22 0 0 0 68 20" fill="none" stroke="#cdd1d6" strokeWidth="8" />
          <circle cx="25" cy="42" r="15" fill="#3578ee" stroke="#fff" strokeWidth="3" />
          <path d="M25 31L33 51L25 46L17 51Z" fill="#fff" />
        </Tile>
      </DockItem>
      <DockItem>
        <Tile className="bg-[#fbfbfa]">
          <rect width="68" height="21" fill="#e2604f" />
          <text x="34" y="16" textAnchor="middle" fontSize="13.500" fontWeight="600" fontFamily="Inter, sans-serif" fill="#fff">APR</text>
          <text x="34" y="57" textAnchor="middle" fontSize="40" fontWeight="300" letterSpacing="-1.500" fontFamily="Inter, sans-serif" fill="#2a2a2a">23</text>
        </Tile>
      </DockItem>
      <DockItem>
        <Tile className="bg-[#d93830]">
          <path d="M8 15C9 27 27 27 28 15C25 21 11 21 8 15Z" fill="#fff" />
          <circle cx="18" cy="19" r="4.500" fill="#fff" />
          <circle cx="18" cy="44.500" r="6.500" fill="#fff" />
          <circle cx="18" cy="44.500" r="7.500" fill="none" stroke="#fff" strokeWidth="3.500" strokeDasharray="1.800 1.500" />
          <g fill="none" stroke="#fff" strokeWidth="2.400">
            <path d="M34 15H59M38 15V19C44 18 43 24 38 24C42 24 42 28 39 29M46 15V29M46 22C49 18 52 20 52 24M54 15V29M58 15V29M54 15C54 11 58 11 60 13M48 27L53 23" />
            <path d="M29 40H60M31 40C31 46 35 47 36 44M38 40V54M43 40V54M43 46C46 45 49 46 50 51M52 40V50L57 54M58 40V53M50 40C52 36 56 35 60 38" />
          </g>
        </Tile>
      </DockItem>
      <DockItem>
        <Tile className="bg-[#fbfbf9]">
          {["#3478f6", "#e6492d", "#f09a37"].map((c, i) => (
            <g key={c}>
              <circle cx="13" cy={17 + i * 17} r="5.200" fill="none" stroke={c} strokeWidth="1.200" />
              <circle cx="13" cy={17 + i * 17} r="3.600" fill={c} />
              <path d={`M25 ${17 + i * 17}H60`} stroke="#c4c4c4" strokeWidth="1.400" />
            </g>
          ))}
        </Tile>
      </DockItem>
      <DockItem running>
        <Tile className="bg-linear-to-b from-[#fbfaf7] to-[#e9e8e4]">
          <rect width="68" height="17" fill="#f8d24c" />
          <path d="M0 17.500H68" stroke="#d8a930" strokeWidth="1" />
          <path d="M2 20.500H68" stroke="#b5b3ae" strokeWidth="1.600" strokeDasharray="1 1.600" />
          <path d="M0 34H68M0 51H68" stroke="#d2d1cd" strokeWidth="1.200" />
        </Tile>
      </DockItem>
      <DockItem>
        <Tile className="bg-white">
          <circle cx="27" cy="41" r="19" fill="#ef7a5b" />
          <path d="M9 36A19 19 0 0 1 27 22L22 32Z" fill="#f2a844" />
          <rect x="23" y="9" width="37" height="37" rx="4" fill="#5fc9f3" fillOpacity="0.920" />
          <path d="M14 44C17 34 22 24 26 27C30 30 21 42 28 42C33 42 35 27 39 29C42 31 37 41 43 40C49 39 50 30 54 32C57 34 56 37 62 31" fill="none" stroke="#17324e" strokeWidth="3.300" strokeLinecap="round" />
        </Tile>
      </DockItem>
      <DockItem>
        <Tile className="bg-white">
          <path d="M7 34L17 24L28 35L28 56Z" fill="#2e5cb8" />
          <path d="M18 46L52 13L62 23L29 56Z" fill="#5ba3ea" />
        </Tile>
      </DockItem>
      <DockItem>
        <Tile className="bg-linear-to-b from-[#d5dce1] to-[#8d8d8b]">
          <circle cx="34" cy="34" r="29" fill="#2c2c2d" />
          <circle cx="34" cy="34" r="26.500" fill="none" stroke="#a9aaab" strokeWidth="3" strokeDasharray="1 1.080" />
          <circle cx="34" cy="34" r="22" fill="#4b4c4d" stroke="#b9babb" strokeWidth="2.500" />
          <circle cx="34" cy="34" r="12" fill="none" stroke="#a9aaab" strokeWidth="2.500" />
          <path d="M34 34H55M34 34L23.500 16M34 34L23.500 52" stroke="#c8c9ca" strokeWidth="3" />
          <circle cx="34" cy="34" r="3" fill="#d5d6d7" />
        </Tile>
      </DockItem>
      <DockItem>
        <Tile className="bg-white">
          <circle cx="35.500" cy="34" r="22.500" fill="#e06a49" />
          <path d="M35.500 11.500A22.500 22.500 0 0 1 58 34H35.500Z" fill="#f09676" />
          <path d="M58 34A22.500 22.500 0 0 1 16 45L35.500 34Z" fill="#c4573a" />
          <OfficeBadge x={8} y={21} s={25} color="#b8432a" letter="P" />
        </Tile>
      </DockItem>
      <DockItem>
        <Tile className="bg-white">
          <path d="M14 14H28L54 42V54H40L14 26Z" fill="#ed5164" />
          <path d="M36 14H51Q54 14 54 17V32Z" fill="#ef5c70" />
          <path d="M14 36L32 54H17Q14 54 14 51Z" fill="#ea475a" />
        </Tile>
      </DockItem>
      <DockItem running>
        <Tile className="bg-white">
          <path d="M20 11H54V33H20Z" fill="#2b7cd0" />
          <path d="M20 11H54V17H20Z" fill="#2559a2" />
          <path d="M43 17H54V27H43Z" fill="#74d3f9" />
          <path d="M32 17H43V27H32Z" fill="#3e97e0" />
          <path d="M32 27H43V38H32Z" fill="#2f6fc4" />
          <path d="M43 27H54V38H43Z" fill="#4ba4e8" />
          <path d="M18 38L37 47L56 33V56H18Z" fill="#58abe6" />
          <path d="M30 41L56 56V34Z" fill="#4194dc" />
          <OfficeBadge x={6} y={21} s={25} color="#2c6cc4" letter="O" />
        </Tile>
      </DockItem>
      <DockItem running>
        <Tile className="bg-white">
          <path d="M17 11H56V23H17Z" fill="#5ca3ea" />
          <path d="M17 23H56V34H17Z" fill="#447ccc" />
          <path d="M17 34H56V45H17Z" fill="#2d5cb8" />
          <path d="M17 45H56V56H17Z" fill="#203f87" />
          <OfficeBadge x={6} y={21} s={25} color="#2854b4" letter="W" />
        </Tile>
      </DockItem>
      <DockItem>
        <Tile className="bg-linear-to-b from-[#ec6177] to-[#e93e4a]">
          <MusicNote />
        </Tile>
      </DockItem>
      <DockItem running>
        <Tile className="bg-[#cdbf68]">
          <path d="M0 0H68V36C66 50 58 61 44 61H14Q0 60 0 48Z" fill="#f7eb94" />
          <path d="M68 36C60 46 52 58 44 61C58 61 66 52 68 36Z" fill="#d6c871" />
          <path d="M12 24C16 14 18 10 16 20C18 24 22 14 25 18C27 24 30 21 33 20H56" fill="none" stroke="#d9c66a" strokeWidth="3.500" />
          <path d="M11 33H57M11 45H36" stroke="#d9c66a" strokeWidth="4" />
        </Tile>
      </DockItem>
      <DockItem running>
        <Tile className="bg-[#a32417]">
          <path
            d="M33 14C37 14 37 22 33 31C29 41 21 54 16 54C11 52 18 45 30 42C42 39 55 39 56 43C56 48 44 46 38 37C33 30 28 14 33 14Z"
            fill="none"
            stroke="#fff"
            strokeWidth="3"
          />
        </Tile>
      </DockItem>
      <DockItem>
        <Tile className="bg-linear-to-b from-[#b765e8] to-[#6f2bab]">
          <circle cx="34" cy="30" r="5.600" fill="#fff" />
          <path d="M28.500 42Q28.500 38 34 38Q39.500 38 39.500 42L38 57Q37.500 60 34 60Q30.500 60 30 57Z" fill="#fff" />
          <path d="M24.500 42.500A15.500 15.500 0 1 1 43.500 42.500" fill="none" stroke="#fff" strokeWidth="2.600" />
          <path d="M24 52A23 23 0 1 1 44 52" fill="none" stroke="#fff" strokeWidth="2.600" />
        </Tile>
      </DockItem>
      <DockItem running>
        <div className="h-[70px] w-[70px] rounded-full bg-[#111]">
          <SiSpotify className="h-full w-full text-[#68d671]" />
        </div>
      </DockItem>
      <DockItem running>
        <Tile className="bg-linear-to-b from-[#dfe3e7] to-[#85878a]">
          <rect x="2" y="2" width="64" height="64" rx="14" fill="#000" />
          <rect x="8" y="8" width="52" height="52" rx="8" fill="#262626" />
          <path d="M12 12.500L19 17.500L12 22.500" fill="none" stroke="#fff" strokeWidth="2.400" />
          <path d="M23 25.500H33" stroke="#fff" strokeWidth="2.400" />
        </Tile>
      </DockItem>
      <DockItem>
        <div className="flex h-[68px] w-[68px] items-center justify-center rounded-[16px] bg-[#484848]">
          <SiSublimetext className="h-[48px] w-[48px] text-[#f29f38]" />
        </div>
      </DockItem>
      <DockItem>
        <div className="flex h-[78px] w-[78px] items-center justify-center bg-[#d53a3a]">
          <SiMendeley className="h-[62px] w-[62px] text-white" />
        </div>
      </DockItem>
      <DockItem>
        <div className="relative">
          <Tile className="bg-white">
            <path d="M0 17H68M0 25.500H68M0 34H68M0 42.500H68M0 51H68M0 59.500H68" stroke="#c2c4c6" strokeWidth="1.300" />
            <path d="M11 0V68" stroke="#f0b0a8" strokeWidth="1" />
          </Tile>
          <svg className="absolute -top-[8px] left-0" width="72" height="84" viewBox="0 0 72 84">
            <path d="M26 79L30 63L57 6L65 10L38 66Z" fill="#9fb4c6" stroke="#5d6d7c" strokeWidth="1" />
            <path d="M33 62L60 7" stroke="#e3eef6" strokeWidth="2" />
            <path d="M26 79L28 71L31 73Z" fill="#222" />
            <path d="M59 5L62 1L66 3L64 8Z" fill="#7d98b0" />
          </svg>
        </div>
      </DockItem>
      <div className="ml-[20px] mr-[18px] mt-[3px] h-[78px] w-[2px] bg-[#b85a2a]" />
      <DockItem running>
        <Tile className="bg-[#fbfaf8]">
          <circle cx="34" cy="34" r="29" fill="#52a352" />
          <path d="M34 34L8.900 19.500A29 29 0 0 1 59.100 19.500H34Z" fill="#d94f3f" />
          <path d="M59.100 19.500A29 29 0 0 1 34 63L46.500 41L46 19.500Z" fill="#f3c34a" />
          <path d="M34 19.500H59V28H34Z" fill="#f3c34a" />
          <path d="M8.900 19.500L22 42L34 30Z" fill="#d94f3f" />
          <path d="M8.900 19.500L21.500 41.500Q28 49 34 48L33 63A29 29 0 0 1 8.900 19.500Z" fill="#52a352" />
          <circle cx="34" cy="33" r="14" fill="#fff" />
          <circle cx="34" cy="33" r="11.300" fill="#3f78e0" />
        </Tile>
      </DockItem>
      <DockItem running>
        <Tile className="bg-white">
          <ExcelMark />
        </Tile>
      </DockItem>
      <DockItem running>
        <Tile className="bg-white">
          <path d="M18 26A17 17 0 0 1 50 28L40 38Z" fill="#2c62bb" />
          <path d="M16 50A12 12 0 0 1 18 26Q24 25 29 29L46 39L30 50Z" fill="#3a78cc" />
          <path d="M29 34Q38 25 50 27A11.500 11.500 0 0 1 60 44L44 40Z" fill="#3f8cdd" />
          <path d="M10 46L36 33L61 44Q59 51 50 51H18Q13 51 10 46Z" fill="#4a9de6" />
        </Tile>
      </DockItem>
      <DockItem running>
        <div className="h-[68px] w-[69px] overflow-hidden rounded-[3px] border-2 border-[#3f7081] bg-[linear-gradient(170deg,#b8ccd8,#7ba0b0_45%,#4f8193_75%)]">
          <svg className="block" width="65" height="64" viewBox="0 0 65 64">
            <path d="M8 11L14 6H65V16H14Z" fill="#f6f6f2" />
            <path d="M28 23L33 19H65V28H33Z" fill="#e9e9e4" />
            <path d="M20 6V16" stroke="#e0563a" strokeWidth="3" />
            <path d="M27 6V16M49 6V16" stroke="#eec53c" strokeWidth="3" />
            <path d="M34 6V16M55 19V28" stroke="#86c03e" strokeWidth="3" />
            <path d="M38 19V28" stroke="#e0563a" strokeWidth="3" />
            <path d="M42 19V28" stroke="#eec53c" strokeWidth="3" />
            <text x="33" y="53" textAnchor="middle" fontSize="36" fontFamily="Liberation Serif, serif" fill="#fff" textLength="49" lengthAdjust="spacingAndGlyphs">igv</text>
          </svg>
        </div>
      </DockItem>
      <div className="ml-[20px] mr-[22px] mt-[3px] h-[78px] w-[2px] bg-[#bb5230]" />
      <div className="relative mt-[16px] h-[46px] w-[79px] bg-[#fbfbfb]">
        <div className="h-[2px] bg-[#3c8a56]" />
        <div className="h-[7px] bg-[#e6e8e7]" />
        <svg className="block" width="79" height="30" viewBox="0 0 79 30">
          <path d="M3 6H77" stroke="#9b9b9b" strokeWidth="6" strokeDasharray="1 1.200 2 0.800 1 1.500 1.500 1" opacity="0.550" />
          <path d="M7 17H30" stroke="#a5a5a5" strokeWidth="5" strokeDasharray="1.500 1 1 1" opacity="0.600" />
        </svg>
        <div className="absolute left-[51px] top-[39px] flex h-[22px] w-[25px] items-center justify-center rounded-[6px] bg-white">
          <svg width="22" height="20" viewBox="4 8 54 50">
            <ExcelMark />
          </svg>
        </div>
      </div>
      <svg className="ml-[17px] mt-px block" width="62" height="80" viewBox="0 0 62 80">
        <path d="M1 12L10 73Q11 78 31 78Q51 78 52 73L61 12Z" fill="#dedede" />
        <path d="M12 24L18 72M24 26L27 75M38 26L36 75M50 24L44 72" stroke="#ebebeb" strokeWidth="4" />
        <ellipse cx="31" cy="12" rx="30" ry="7" fill="#b9aea9" stroke="#efefef" strokeWidth="1.500" />
        <path d="M6 13L12 4L20 8L27 3L32 9L38 1L46 6L54 7L57 13L46 17L30 18L14 17Z" fill="#e6e6e6" />
        <path d="M18 5L25 9L20 14ZM37 6L44 9L40 15ZM28 11L32 14L26 17ZM48 8L52 12L47 15ZM10 10L14 12L11 15Z" fill="#4d5a66" />
        <path d="M24 10L30 9L29 14Z" fill="#4ca9c9" />
        <path d="M42 11L47 12L44 16Z" fill="#c76f52" />
      </svg>
    </div>
  );
}

export default function App() {
  return (
    <div className="relative flex h-[1800px] w-[2880px] flex-col overflow-hidden font-['Liberation_Sans',Arial,sans-serif]">
      <Wallpaper />
      <div className="relative font-[Inter,sans-serif]">
        <MenuBar />
      </div>
      <AppWindow />
      <Dock />
    </div>
  );
}
